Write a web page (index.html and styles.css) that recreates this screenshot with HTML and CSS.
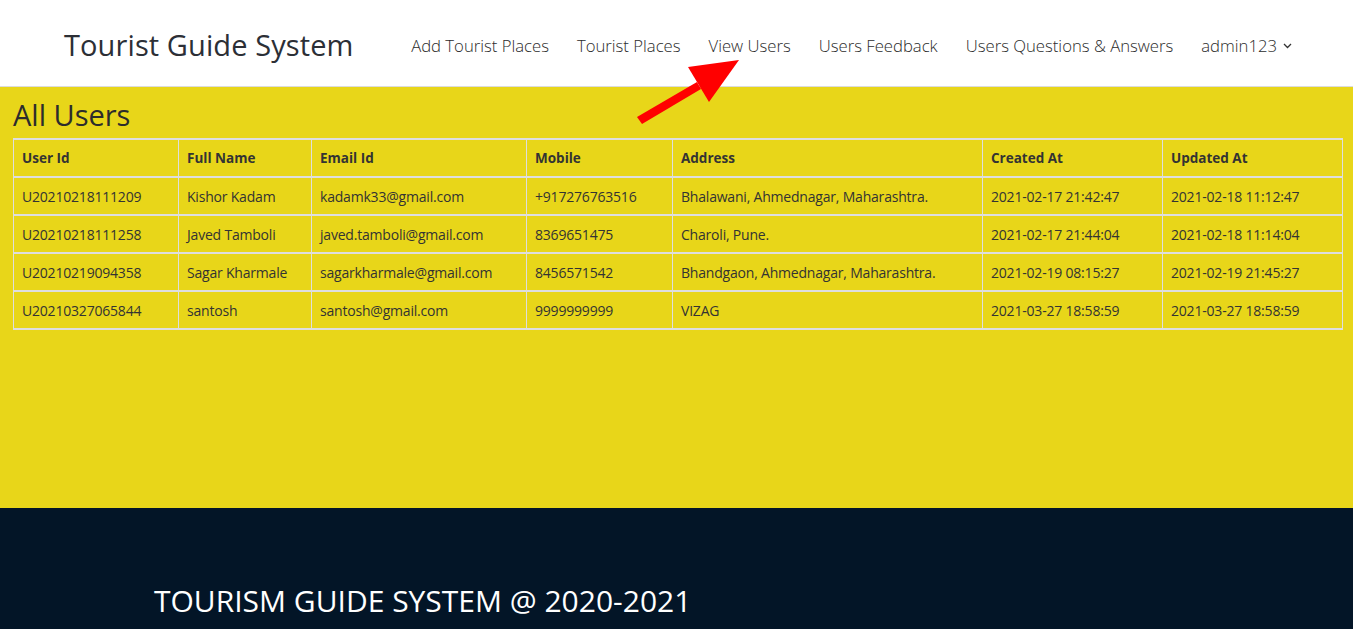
FILE: index.html
```html
<!DOCTYPE html>
<html lang="en">
<head>
<meta charset="utf-8">
<title>Tourist Guide System - All Users</title>
<link rel="stylesheet" href="styles.css">
</head>
<body>
<header class="topbar">
  <div class="brand">Tourist Guide System</div>
  <nav class="nav">
    <a class="nav-link" href="#">Add Tourist Places</a>
    <a class="nav-link" href="#">Tourist Places</a>
    <a class="nav-link" href="#">View Users</a>
    <a class="nav-link" href="#">Users Feedback</a>
    <a class="nav-link" href="#">Users Questions &amp; Answers</a>
    <a class="nav-link dropdown" href="#">admin123
      <svg class="chev" width="9" height="6" viewBox="0 0 9 6"><path d="M1 1 L4.5 4.5 L8 1" fill="none" stroke="#333" stroke-width="1.3"/></svg>
    </a>
  </nav>
</header>
<svg class="arrow" width="130" height="80" viewBox="630 50 130 80">
  <polygon points="637,117 642,124 701,89 697,82" fill="#ff0000"/>
  <polygon points="688,67 739,60 709,102" fill="#ff0000"/>
</svg>
<main class="content">
  <h2 class="title">All Users</h2>
  <table class="users">
    <colgroup>
      <col class="c1"><col class="c2"><col class="c3"><col class="c4"><col class="c5"><col class="c6"><col class="c7">
    </colgroup>
    <thead>
      <tr><th>User Id</th><th>Full Name</th><th>Email Id</th><th>Mobile</th><th>Address</th><th>Created At</th><th>Updated At</th></tr>
    </thead>
    <tbody>
      <tr><td>U20210218111209</td><td>Kishor Kadam</td><td>kadamk33@gmail.com</td><td>+917276763516</td><td>Bhalawani, Ahmednagar, Maharashtra.</td><td>2021-02-17 21:42:47</td><td>2021-02-18 11:12:47</td></tr>
      <tr><td>U20210218111258</td><td>Javed Tamboli</td><td>javed.tamboli@gmail.com</td><td>8369651475</td><td>Charoli, Pune.</td><td>2021-02-17 21:44:04</td><td>2021-02-18 11:14:04</td></tr>
      <tr><td>U20210219094358</td><td>Sagar Kharmale</td><td>sagarkharmale@gmail.com</td><td>8456571542</td><td>Bhandgaon, Ahmednagar, Maharashtra.</td><td>2021-02-19 08:15:27</td><td>2021-02-19 21:45:27</td></tr>
      <tr><td>U20210327065844</td><td>santosh</td><td>santosh@gmail.com</td><td>9999999999</td><td>VIZAG</td><td>2021-03-27 18:58:59</td><td>2021-03-27 18:58:59</td></tr>
    </tbody>
  </table>
</main>
<footer class="footer">
  <p class="footer-text">TOURISM GUIDE SYSTEM @ 2020-2021</p>
</footer>
</body>
</html>
```

FILE: styles.css
```css
* { box-sizing: border-box; }
html, body { margin: 0; padding: 0; }
body {
  font-family: "Open Sans", "Noto Sans", sans-serif;
  color: #333;
  background: #031527;
  position: relative;
  overflow: hidden;
  height: 629px;
}
.topbar {
  height: 87px;
  background: #fff;
  border-bottom: 1px solid #dcdcdc;
  display: flex;
  align-items: center;
  justify-content: space-between;
  padding: 2px 61px 0 64px;
}
.brand {
  font-size: 29px;
  color: #2c2f36;
  letter-spacing: 0.1px;
}
.nav {
  display: flex;
  align-items: center;
  gap: 28px;
  padding-top: 2px;
}
.nav-link {
  font-size: 16.7px;
  font-weight: 300;
  color: #2b2b2b;
  text-decoration: none;
  display: flex;
  align-items: center;
  gap: 6px;
}
.chev { margin-top: 2px; }
.arrow {
  position: absolute;
  left: 630px;
  top: 50px;
}
.content {
  background: #e8d619;
  height: 421px;
  padding: 9px 11px 0 13px;
}
.title {
  margin: 0 0 4px;
  font-size: 29px;
  font-weight: 400;
  color: #2c2c2c;
  line-height: 38px;
}
.users {
  width: 1330px;
  table-layout: fixed;
  border-collapse: collapse;
  font-size: 14px;
  color: #333;
}
.users td { letter-spacing: -0.2px; }
.c1 { width: 165px; }
.c2 { width: 133px; }
.c3 { width: 215px; }
.c4 { width: 146px; }
.c5 { width: 310px; }
.c6 { width: 180px; }
.c7 { width: 180px; }
.users th, .users td {
  border-left: 1px solid #dedede;
  border-right: 1px solid #dedede;
  border-top: 2px solid #dedede;
  border-bottom: 2px solid #dedede;
  height: 38px;
  padding: 0 8px;
  text-align: left;
  white-space: nowrap;
}
.users th { font-weight: 700; font-size: 13.5px; }
.footer {
  height: 121px;
  background: #031527;
  padding: 75px 0 0 154px;
}
.footer-text {
  margin: 0;
  color: #fff;
  font-size: 30px;
  line-height: 36px;
  letter-spacing: 0;
}
```
